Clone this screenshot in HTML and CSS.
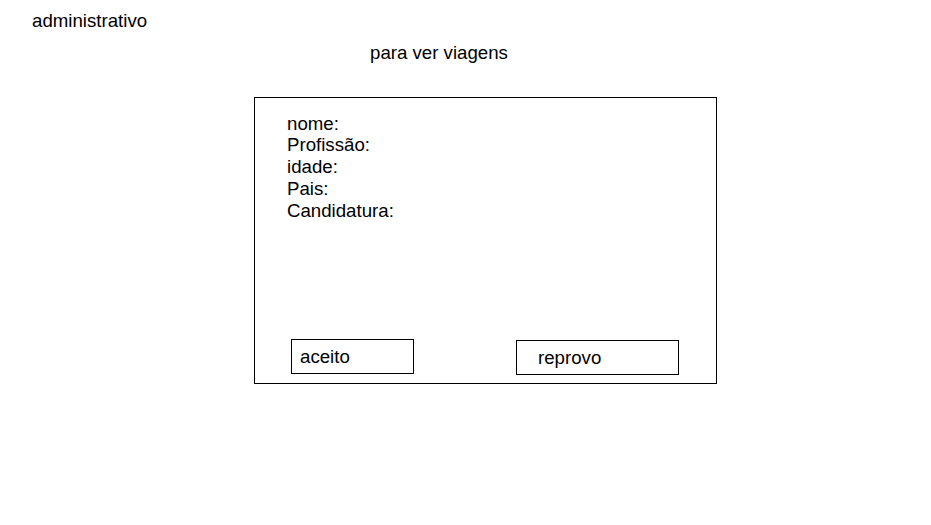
FILE: index.html
```html
<!DOCTYPE html>
<html lang="pt">
<head>
    <meta charset="UTF-8">
    <meta name="viewport" content="width=device-width, initial-scale=1.0">
    <title>administrativo</title>
    <link rel="stylesheet" href="styles.css">
</head>
<body>
    <div class="page-title">administrativo</div>
    <div class="subtitle">para ver viagens</div>

    <div class="panel">
        <div class="fields">
            <div class="field">nome:</div>
            <div class="field">Profissão:</div>
            <div class="field">idade:</div>
            <div class="field">Pais:</div>
            <div class="field">Candidatura:</div>
        </div>
        <div class="actions">
            <div class="btn btn-accept">aceito</div>
            <div class="btn btn-reject">reprovo</div>
        </div>
    </div>
</body>
</html>
```

FILE: styles.css
```css
body {
    font-family: "Liberation Sans", Arial, sans-serif;
    font-size: 18.67px;
    line-height: 21.5px;
    color: #000;
    background-color: #fff;
    margin: 0;
    padding: 0;
}
.page-title {
    margin: 10px 0 0 32px;
}
.subtitle {
    margin: 10px 0 0 370px;
}
.panel {
    box-sizing: border-box;
    width: 463px;
    height: 287px;
    margin: 34px 0 0 254px;
    border: 1px solid #000;
    padding: 14.5px 0 8px 32px;
    display: flex;
    flex-direction: column;
}
.field {
    line-height: 21.75px;
}
.actions {
    margin-top: auto;
    padding-left: 4px;
    display: flex;
    align-items: flex-start;
}
.btn {
    box-sizing: border-box;
    height: 35px;
    border: 1px solid #000;
    padding-top: 5.5px;
}
.btn-accept {
    width: 123px;
    padding-left: 8px;
}
.btn-reject {
    width: 163px;
    margin: 1px 0 0 102px;
    padding-top: 6px;
    padding-left: 21px;
}
```
